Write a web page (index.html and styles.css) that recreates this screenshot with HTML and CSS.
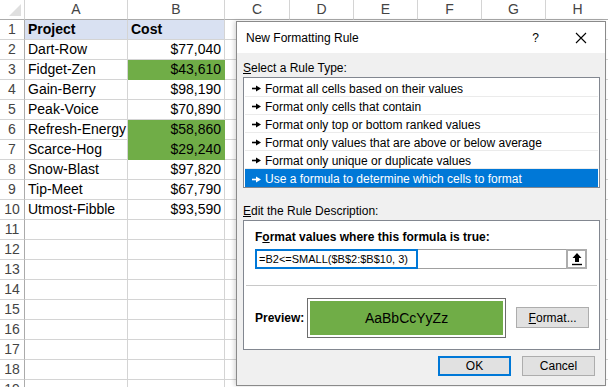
FILE: index.html
```html
<!DOCTYPE html>
<html lang="en">
<head>
    <meta charset="UTF-8">
    <title>New Formatting Rule</title>
    <link rel="stylesheet" href="styles.css">
</head>
<body>
    <div class="sheet">
        <div class="row head">
            <div class="corner"></div>
            <div class="colh">A</div><div class="colh">B</div><div class="colh">C</div><div class="colh">D</div>
            <div class="colh">E</div><div class="colh">F</div><div class="colh">G</div><div class="colh">H</div>
        </div>
        <div class="row"><div class="rh">1</div><div class="c title">Project</div><div class="c title">Cost</div><div class="c rest"></div></div>
        <div class="row"><div class="rh">2</div><div class="c">Dart-Row</div><div class="c num">$77,040</div><div class="c rest"></div></div>
        <div class="row"><div class="rh">3</div><div class="c">Fidget-Zen</div><div class="c num hit">$43,610</div><div class="c rest"></div></div>
        <div class="row"><div class="rh">4</div><div class="c">Gain-Berry</div><div class="c num">$98,190</div><div class="c rest"></div></div>
        <div class="row"><div class="rh">5</div><div class="c">Peak-Voice</div><div class="c num">$70,890</div><div class="c rest"></div></div>
        <div class="row"><div class="rh">6</div><div class="c">Refresh-Energy</div><div class="c num hit">$58,860</div><div class="c rest"></div></div>
        <div class="row"><div class="rh">7</div><div class="c">Scarce-Hog</div><div class="c num hit">$29,240</div><div class="c rest"></div></div>
        <div class="row"><div class="rh">8</div><div class="c">Snow-Blast</div><div class="c num">$97,820</div><div class="c rest"></div></div>
        <div class="row"><div class="rh">9</div><div class="c">Tip-Meet</div><div class="c num">$67,790</div><div class="c rest"></div></div>
        <div class="row"><div class="rh">10</div><div class="c">Utmost-Fibble</div><div class="c num">$93,590</div><div class="c rest"></div></div>
        <div class="row"><div class="rh">11</div><div class="c"></div><div class="c"></div><div class="c rest"></div></div>
        <div class="row"><div class="rh">12</div><div class="c"></div><div class="c"></div><div class="c rest"></div></div>
        <div class="row"><div class="rh">13</div><div class="c"></div><div class="c"></div><div class="c rest"></div></div>
        <div class="row"><div class="rh">14</div><div class="c"></div><div class="c"></div><div class="c rest"></div></div>
        <div class="row"><div class="rh">15</div><div class="c"></div><div class="c"></div><div class="c rest"></div></div>
        <div class="row"><div class="rh">16</div><div class="c"></div><div class="c"></div><div class="c rest"></div></div>
        <div class="row"><div class="rh">17</div><div class="c"></div><div class="c"></div><div class="c rest"></div></div>
        <div class="row"><div class="rh">18</div><div class="c"></div><div class="c"></div><div class="c rest"></div></div>
        <div class="row"><div class="rh">19</div><div class="c"></div><div class="c"></div><div class="c rest"></div></div>
    </div>

    <div class="dialog">
        <div class="titlebar">
            <span class="caption">New Formatting Rule</span>
            <span class="help">?</span>
            <svg class="close" width="12" height="12" viewBox="0 0 12 12"><path d="M1 1L11 11M11 1L1 11" stroke="#000" stroke-width="1.1"/></svg>
        </div>
        <div class="body">
            <div class="label"><u>S</u>elect a Rule Type:</div>
            <ul class="rules">
                <li><svg class="arrow" width="9" height="7" viewBox="0 0 9 7"><path d="M0 3.5H5" stroke="currentColor" stroke-width="1.6"/><path d="M4 0.5L9 3.5L4 6.5Z" fill="currentColor"/></svg>Format all cells based on their values</li>
                <li><svg class="arrow" width="9" height="7" viewBox="0 0 9 7"><path d="M0 3.5H5" stroke="currentColor" stroke-width="1.6"/><path d="M4 0.5L9 3.5L4 6.5Z" fill="currentColor"/></svg>Format only cells that contain</li>
                <li><svg class="arrow" width="9" height="7" viewBox="0 0 9 7"><path d="M0 3.5H5" stroke="currentColor" stroke-width="1.6"/><path d="M4 0.5L9 3.5L4 6.5Z" fill="currentColor"/></svg>Format only top or bottom ranked values</li>
                <li><svg class="arrow" width="9" height="7" viewBox="0 0 9 7"><path d="M0 3.5H5" stroke="currentColor" stroke-width="1.6"/><path d="M4 0.5L9 3.5L4 6.5Z" fill="currentColor"/></svg>Format only values that are above or below average</li>
                <li><svg class="arrow" width="9" height="7" viewBox="0 0 9 7"><path d="M0 3.5H5" stroke="currentColor" stroke-width="1.6"/><path d="M4 0.5L9 3.5L4 6.5Z" fill="currentColor"/></svg>Format only unique or duplicate values</li>
                <li class="selected"><svg class="arrow" width="9" height="7" viewBox="0 0 9 7"><path d="M0 3.5H5" stroke="currentColor" stroke-width="1.6"/><path d="M4 0.5L9 3.5L4 6.5Z" fill="currentColor"/></svg>Use a formula to determine which cells to format</li>
            </ul>
            <div class="label second"><u>E</u>dit the Rule Description:</div>
            <div class="desc">
                <div class="desc-top">
                    <div class="bold">F<u>o</u>rmat values where this formula is true:</div>
                    <div class="formula">
                        <div class="field"><span class="focus">=B2&lt;=SMALL($B$2:$B$10, 3)</span></div>
                        <div class="pick">
                            <svg width="12" height="14" viewBox="0 0 12 14"><path d="M6 1L1.5 6H4V10H8V6H10.5Z" fill="#000"/><path d="M1 12.5H11" stroke="#000" stroke-width="1.4"/></svg>
                        </div>
                    </div>
                </div>
                <div class="desc-bottom">
                    <div class="bold">Preview:</div>
                    <div class="preview"><div class="sample">AaBbCcYyZz</div></div>
                    <button class="btn format"><u>F</u>ormat...</button>
                </div>
            </div>
            <div class="actions">
                <button class="btn ok">OK</button>
                <button class="btn">Cancel</button>
            </div>
        </div>
    </div>
</body>
</html>
```

FILE: styles.css
```css
body {
    margin: 0;
    width: 608px;
    height: 387px;
    overflow: hidden;
    background: #fff;
    position: relative;
    font-family: "Liberation Sans", Arial, sans-serif;
}
.sheet {
    font-size: 14px;
    color: #000;
}
.row {
    display: grid;
    grid-template-columns: 25px 103px 97px 1fr;
    height: 20px;
}
.row.head {
    grid-template-columns: 25px 103px 97px 65px 64px 64px 64px 64px 64px;
    background: #fff;
}
.corner {
    border-right: 1px solid #d4d4d4;
    border-bottom: 1px solid #ababab;
    position: relative;
}
.corner::after {
    content: "";
    position: absolute;
    right: 3px;
    bottom: 3px;
    border-left: 12px solid transparent;
    border-bottom: 12px solid #dfdfdf;
}
.colh {
    text-align: center;
    color: #444;
    line-height: 19px;
    border-right: 1px solid #d4d4d4;
    border-bottom: 1px solid #ababab;
}
.rh {
    text-align: center;
    color: #444;
    line-height: 19px;
    border-right: 1px solid #ababab;
    border-bottom: 1px solid #d4d4d4;
}
.c {
    padding: 0 3px;
    line-height: 19px;
    border-right: 1px solid #d4d4d4;
    border-bottom: 1px solid #d4d4d4;
    white-space: nowrap;
    overflow: hidden;
}
.c.title {
    background: #d9e1f2;
    font-weight: bold;
}
.c.num {
    text-align: right;
}
.c.hit {
    background: #70ad47;
    border-color: #70ad47;
}
.c.rest {
    border-right: none;
}

/* dialog */
.dialog {
    position: absolute;
    left: 236px;
    top: 21px;
    width: 370px;
    height: 365px;
    box-sizing: border-box;
    border: 1px solid #8a8a8a;
    background: #f0f0f0;
    box-shadow: -2px 0 4px rgba(0, 0, 0, 0.15);
    font-size: 12px;
    color: #000;
    display: flex;
    flex-direction: column;
}
.titlebar {
    height: 31px;
    background: #fff;
    display: flex;
    align-items: center;
    padding: 0 18px 0 9px;
}
.caption {
    flex: 1;
    font-size: 12px;
}
.help {
    margin-right: 36px;
    font-size: 12px;
}
.body {
    flex: 1;
    padding: 6px 5px 0 6px;
    display: flex;
    flex-direction: column;
}
.label {
    height: 18px;
    line-height: 18px;
}
.label.second {
    line-height: 22px;
    height: 20px;
}
.rules {
    list-style: none;
    margin: 0;
    padding: 1px;
    border: 1px solid #828790;
    background: #fff;
    height: 111px;
    box-sizing: border-box;
    margin-bottom: 12px;
}
.rules li {
    height: 18px;
    padding-top: 2px;
    border-bottom: 1px solid #ebebeb;
    box-sizing: border-box;
    padding-left: 7px;
    display: flex;
    align-items: center;
    white-space: nowrap;
    color: #000;
}
.rules li.selected {
    background: #0078d7;
    color: #fff;
    border-bottom: none;
}
.arrow {
    margin-right: 4px;
}
.desc {
    border: 1px solid #828790;
    background: #fff;
    height: 130px;
    box-sizing: border-box;
    display: flex;
    flex-direction: column;
}
.desc-top {
    padding: 9px 10px 0 9px;
    height: 65px;
    box-sizing: border-box;
    border-bottom: 1px solid #c8c8c8;
    margin: 0 2px;
}
.bold {
    font-weight: bold;
}
.formula {
    display: flex;
    margin-top: 5px;
    height: 20px;
}
.field {
    flex: 1;
    border: 1px solid #a0a0a0;
    border-right: none;
    height: 20px;
    box-sizing: border-box;
}
.focus {
    display: inline-block;
    height: 20px;
    line-height: 16px;
    box-sizing: border-box;
    border: 2px solid #0078d7;
    padding: 0 8px 0 2px;
    margin: -1px 0 0 -1px;
    font-size: 11px;
    white-space: nowrap;
}
.pick {
    width: 21px;
    height: 20px;
    box-sizing: border-box;
    border: 2px solid #adadad;
    background: #fff;
    display: flex;
    align-items: center;
    justify-content: center;
}
.desc-bottom {
    flex: 1;
    display: flex;
    align-items: center;
    padding: 0 10px 0 11px;
}
.desc-bottom .bold {
    width: 52px;
}
.preview {
    width: 200px;
    height: 40px;
    box-sizing: border-box;
    border: 1px solid #6d6d6d;
    padding: 2px;
    margin-right: 10px;
}
.sample {
    height: 100%;
    background: #70ad47;
    display: flex;
    align-items: center;
    justify-content: center;
    font-size: 14px;
}
.btn {
    font-family: inherit;
    font-size: 12px;
    height: 21px;
    width: 73px;
    background: #e1e1e1;
    border: 1px solid #adadad;
    padding: 0;
    color: #000;
}
.actions {
    display: flex;
    justify-content: flex-end;
    gap: 11px;
    margin-top: 6px;
    padding-right: 5px;
}
.actions .btn {
    height: 20px;
}
.btn.ok {
    border: 2px solid #0078d7;
}
```
